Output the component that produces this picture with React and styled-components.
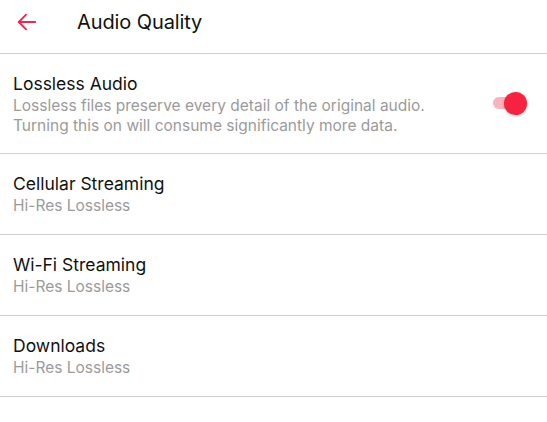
import React, { useState } from 'react';
import styled, { createGlobalStyle } from 'styled-components';

const GlobalStyle = createGlobalStyle`
  html, body {
    margin: 0;
    padding: 0;
    background: #fff;
  }
  body {
    font-family: Inter, "Open Sans", Arial, sans-serif;
    -webkit-font-smoothing: antialiased;
  }
`;

const Page = styled.div`
  width: 547px;
  background: #fff;
`;

// content sits high in the bar, centred around y=22
const Header = styled.header`
  height: 44px;
  padding-bottom: 9px;
  display: flex;
  align-items: center;
  border-bottom: 1px solid #cfcfcf;
`;

const BackButton = styled.button`
  width: 53px;
  height: 44px;
  display: flex;
  align-items: center;
  justify-content: center;
  padding: 0;
  margin-right: 24px;
  border: none;
  background: none;
  color: #f0264a;
  cursor: pointer;
`;

const Title = styled.h1`
  margin: 0;
  font-size: 20px;
  font-weight: 400;
  color: #111;
  letter-spacing: -0.1px;
`;

const List = styled.div`
  display: flex;
  flex-direction: column;
`;

const Row = styled.div`
  display: flex;
  align-items: center;
  justify-content: space-between;
  padding: ${({ tall }) => (tall ? '18px 22px 17px 13px' : '18px 13px')};
  min-height: 44px;
  border-bottom: 1px solid #cfcfcf;
`;

const Texts = styled.div`
  display: flex;
  flex-direction: column;
`;

const RowTitle = styled.div`
  font-size: 17.5px;
  line-height: 24px;
  color: #111;
`;

const RowSub = styled.div`
  font-size: 15.5px;
  line-height: 20px;
  color: #9b9b9b;
`;

const Switch = styled.div`
  position: relative;
  width: 32px;
  height: 12px;
  border-radius: 6px;
  background: ${({ on }) => (on ? '#f8b3bf' : '#cfcfcf')};
  cursor: pointer;
  margin-top: -2px;
`;

const Thumb = styled.span`
  position: absolute;
  top: -5px;
  left: ${({ on }) => (on ? '11px' : '-4px')};
  width: 23px;
  height: 23px;
  border-radius: 50%;
  background: ${({ on }) => (on ? '#f6223f' : '#f4f4f4')};
  box-shadow: 0 1px 3px rgba(0, 0, 0, 0.25);
  transition: left 0.2s ease;
`;

const ArrowIcon = () => (
  <svg width="22" height="22" viewBox="0 0 24 24" fill="none" stroke="currentColor" strokeWidth="2" strokeLinecap="round" strokeLinejoin="round">
    <line x1="21" y1="12" x2="3" y2="12" />
    <polyline points="11 4 3 12 11 20" />
  </svg>
);

const streaming = [
  { title: 'Cellular Streaming', value: 'Hi-Res Lossless' },
  { title: 'Wi-Fi Streaming', value: 'Hi-Res Lossless' },
  { title: 'Downloads', value: 'Hi-Res Lossless' },
];

const App = () => {
  const [lossless, setLossless] = useState(true);

  return (
    <Page>
      <GlobalStyle />
      <Header>
        <BackButton aria-label="Back">
          <ArrowIcon />
        </BackButton>
        <Title>Audio Quality</Title>
      </Header>
      <List>
        <Row tall>
          <Texts>
            <RowTitle>Lossless Audio</RowTitle>
            <RowSub>Lossless files preserve every detail of the original audio.</RowSub>
            <RowSub>Turning this on will consume significantly more data.</RowSub>
          </Texts>
          <Switch on={lossless} onClick={() => setLossless(!lossless)}>
            <Thumb on={lossless} />
          </Switch>
        </Row>
        {streaming.map((item) => (
          <Row key={item.title}>
            <Texts>
              <RowTitle>{item.title}</RowTitle>
              <RowSub>{item.value}</RowSub>
            </Texts>
          </Row>
        ))}
      </List>
    </Page>
  );
};

export default App;
